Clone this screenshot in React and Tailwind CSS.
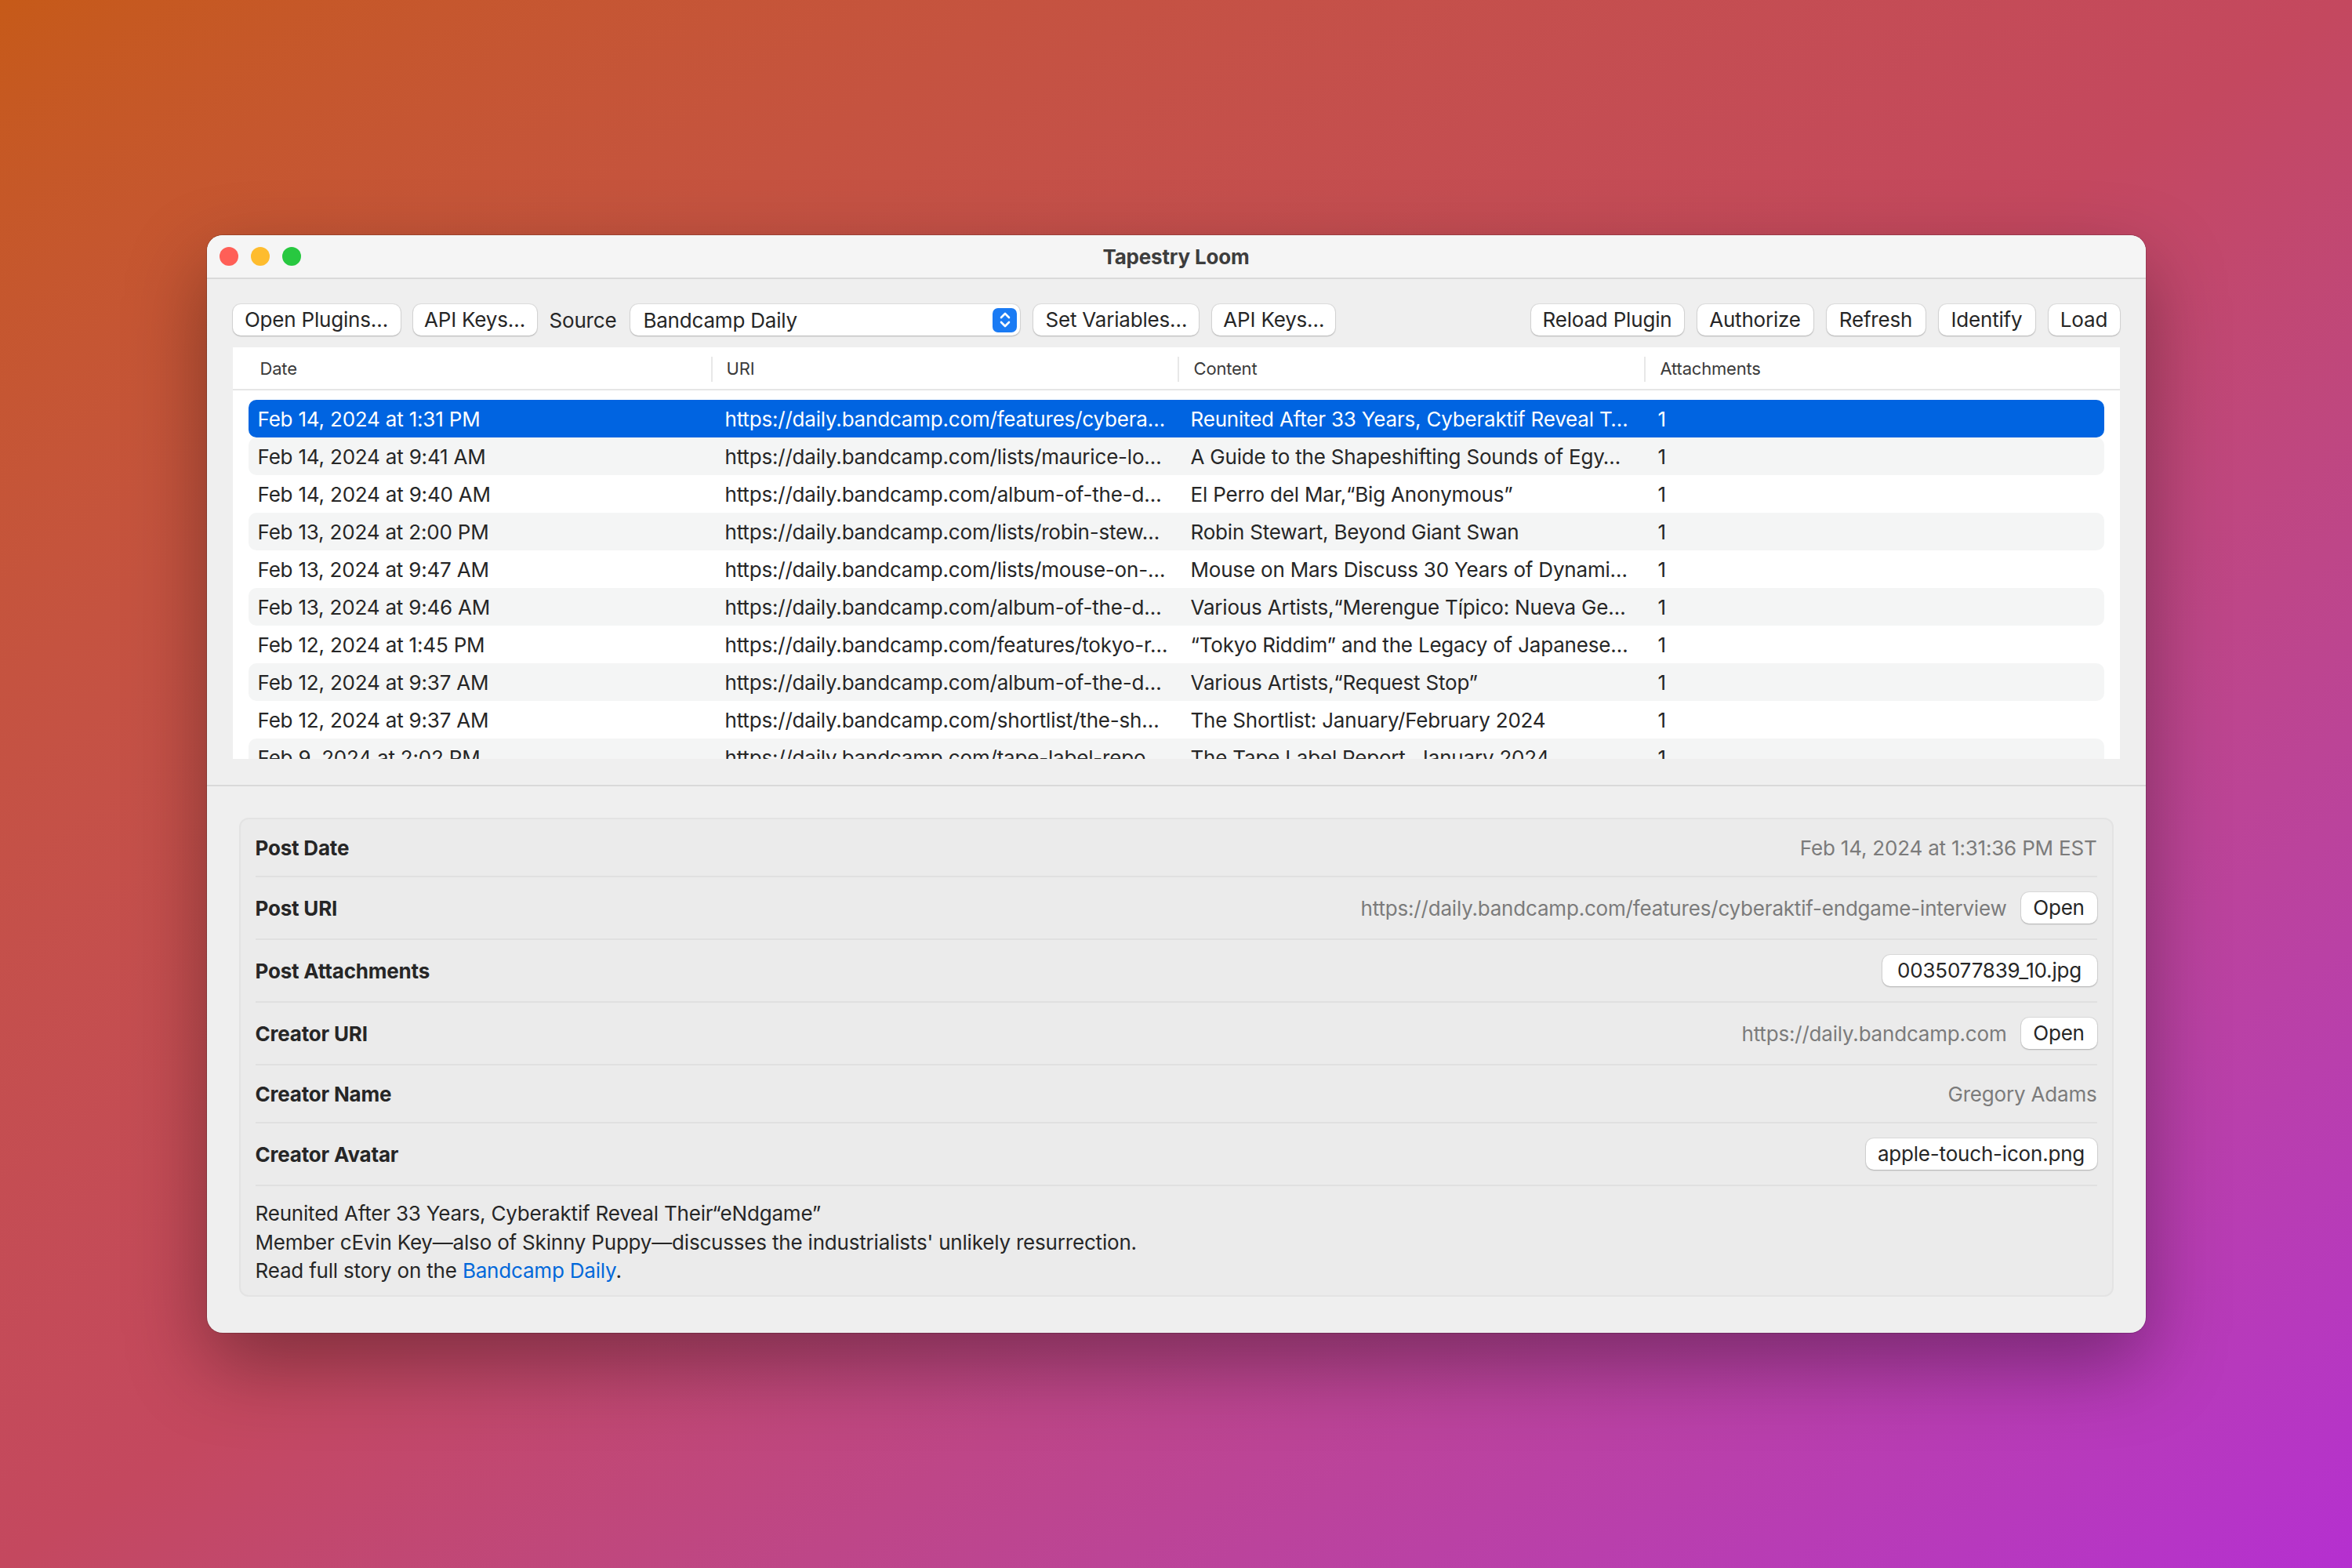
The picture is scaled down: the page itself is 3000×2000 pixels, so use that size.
import React from 'react';

const rows = [
    ['Feb 14, 2024 at 1:31 PM', 'https://daily.bandcamp.com/features/cybera…', 'Reunited After 33 Years, Cyberaktif Reveal T…'],
    ['Feb 14, 2024 at 9:41 AM', 'https://daily.bandcamp.com/lists/maurice-lo…', 'A Guide to the Shapeshifting Sounds of Egy…'],
    ['Feb 14, 2024 at 9:40 AM', 'https://daily.bandcamp.com/album-of-the-d…', 'El Perro del Mar,“Big Anonymous”'],
    ['Feb 13, 2024 at 2:00 PM', 'https://daily.bandcamp.com/lists/robin-stew…', 'Robin Stewart, Beyond Giant Swan'],
    ['Feb 13, 2024 at 9:47 AM', 'https://daily.bandcamp.com/lists/mouse-on-…', 'Mouse on Mars Discuss 30 Years of Dynami…'],
    ['Feb 13, 2024 at 9:46 AM', 'https://daily.bandcamp.com/album-of-the-d…', 'Various Artists,“Merengue Típico: Nueva Ge…'],
    ['Feb 12, 2024 at 1:45 PM', 'https://daily.bandcamp.com/features/tokyo-r…', '“Tokyo Riddim” and the Legacy of Japanese…'],
    ['Feb 12, 2024 at 9:37 AM', 'https://daily.bandcamp.com/album-of-the-d…', 'Various Artists,“Request Stop”'],
    ['Feb 12, 2024 at 9:37 AM', 'https://daily.bandcamp.com/shortlist/the-sh…', 'The Shortlist: January/February 2024'],
    ['Feb 9, 2024 at 2:02 PM', 'https://daily.bandcamp.com/tape-label-repo…', 'The Tape Label Report, January 2024'],
];

function Button({ children, className = '' }) {
    return (
        <button className={`h-[40px] shrink-0 rounded-[10px] bg-white text-[26px] leading-none text-[#262626] shadow-[0_0_0_1px_rgba(0,0,0,0.07),0_1px_2px_rgba(0,0,0,0.2)] ${className}`}>
            {children}
        </button>
    );
}

function Stepper() {
    return (
        <div className="flex h-[31px] w-[31px] items-center justify-center rounded-[7px] bg-[#1a7bf4]">
            <svg width="16" height="22" viewBox="0 0 16 22" fill="none" stroke="white" strokeWidth="2.6" strokeLinecap="round" strokeLinejoin="round">
                <path d="M3 8 L8 3 L13 8" />
                <path d="M3 14 L8 19 L13 14" />
            </svg>
        </div>
    );
}

function DetailRow({ label, children, tall }) {
    return (
        <div className={`flex items-center justify-between border-b-2 border-[#e0e0e0] ${tall ? 'h-[80px]' : 'h-[74px]'}`}>
            <span className="text-[26px] font-bold text-[#262626]">{label}</span>
            <div className="flex items-center gap-[18px]">{children}</div>
        </div>
    );
}

export default function App() {
    return (
        <div className="flex h-[2000px] w-[3000px] items-center justify-center bg-gradient-to-br from-[#c65a18] via-[#c4485f] to-[#b52fd0] font-['Inter','Noto_Sans',sans-serif] tracking-[-0.012em]">
            {/* Window */}
            <div className="flex h-[1400px] w-[2473px] flex-col overflow-hidden rounded-[20px] bg-[#efefef] shadow-[0_0_0_1px_rgba(0,0,0,0.15),0_40px_100px_rgba(0,0,0,0.35)]">
                {/* Title bar */}
                <div className="relative flex h-[56px] shrink-0 items-center border-b-2 border-[#dadada] bg-[#f5f5f5] px-[16px]">
                    <div className="flex gap-[16px]">
                        <span className="h-[24px] w-[24px] rounded-full bg-[#ff5f57]" />
                        <span className="h-[24px] w-[24px] rounded-full bg-[#febc2e]" />
                        <span className="h-[24px] w-[24px] rounded-full bg-[#28c840]" />
                    </div>
                    <div className="absolute inset-0 flex items-center justify-center text-[26px] font-bold text-[#3d3d3d]">
                        Tapestry Loom
                    </div>
                </div>

                {/* Toolbar */}
                <div className="flex items-center px-[33px] pt-[32px]">
                    <Button className="w-[214px]">Open Plugins…</Button>
                    <Button className="ml-[16px] w-[158px]">API Keys…</Button>
                    <span className="ml-[16px] text-[26px] text-[#262626]">Source</span>
                    <div className="ml-[18px] flex h-[40px] w-[497px] items-center justify-between rounded-[10px] bg-white pl-[16px] pr-[4px] shadow-[0_0_0_1px_rgba(0,0,0,0.07),0_1px_2px_rgba(0,0,0,0.2)]">
                        <span className="text-[26px] text-[#262626]">Bandcamp Daily</span>
                        <Stepper />
                    </div>
                    <Button className="ml-[17px] w-[211px]">Set Variables…</Button>
                    <Button className="ml-[17px] w-[157px]">API Keys…</Button>
                    <div className="flex-1" />
                    <div className="flex gap-[17px]">
                        <Button className="w-[195px]">Reload Plugin</Button>
                        <Button className="w-[148px]">Authorize</Button>
                        <Button className="w-[126px]">Refresh</Button>
                        <Button className="w-[123px]">Identify</Button>
                        <Button className="w-[91px]">Load</Button>
                    </div>
                </div>

                {/* Table */}
                <div className="mx-[33px] mt-[15px] h-[525px] shrink-0 overflow-hidden bg-white">
                    <div className="flex h-[55px] items-center border-b-2 border-[#e6e6e6] pt-[2px] text-[22px] text-[#3a3a3a]">
                        <div className="w-[610px] pl-[35px]">Date</div>
                        <div className="flex w-[595px] items-center">
                            <span className="h-[32px] w-[2px] bg-[#e8e8e8]" />
                            <span className="pl-[18px]">URI</span>
                        </div>
                        <div className="flex w-[595px] items-center">
                            <span className="h-[32px] w-[2px] bg-[#e8e8e8]" />
                            <span className="pl-[19px]">Content</span>
                        </div>
                        <div className="flex flex-1 items-center">
                            <span className="h-[32px] w-[2px] bg-[#e8e8e8]" />
                            <span className="pl-[19px]">Attachments</span>
                        </div>
                    </div>
                    <div className="px-[20px] pt-[12px]">
                        {rows.map((r, i) => (
                            <div
                                key={i}
                                className={`grid h-[48px] grid-cols-[596px_594px_596px_1fr] items-center rounded-[10px] pl-[12px] text-[26px] ${
                                    i === 0 ? 'bg-[#0064e1] text-white' : i % 2 === 1 ? 'bg-[#f4f5f5] text-[#262626]' : 'text-[#262626]'
                                }`}
                            >
                                <span className="truncate pr-[16px]">{r[0]}</span>
                                <span className="truncate pr-[16px]">{r[1]}</span>
                                <span className="truncate pr-[16px]">{r[2]}</span>
                                <span>1</span>
                            </div>
                        ))}
                    </div>
                </div>

                <div className="mt-[33px] h-[2px] shrink-0 bg-[#d9d9d9]" />

                {/* Detail */}
                <div className="px-[41px] pt-[40px]">
                    <div className="h-[611px] rounded-[12px] border-2 border-[#e3e3e3] bg-[#ebebeb] px-[19px]">
                        <DetailRow label="Post Date">
                            <span className="text-[26px] text-[#7b7b7b]">Feb 14, 2024 at 1:31:36 PM EST</span>
                        </DetailRow>
                        <DetailRow label="Post URI" tall>
                            <span className="text-[26px] text-[#7b7b7b]">https://daily.bandcamp.com/features/cyberaktif-endgame-interview</span>
                            <Button className="w-[97px]">Open</Button>
                        </DetailRow>
                        <DetailRow label="Post Attachments" tall>
                            <Button className="w-[274px]">0035077839_10.jpg</Button>
                        </DetailRow>
                        <DetailRow label="Creator URI" tall>
                            <span className="text-[26px] text-[#7b7b7b]">https://daily.bandcamp.com</span>
                            <Button className="w-[97px]">Open</Button>
                        </DetailRow>
                        <DetailRow label="Creator Name">
                            <span className="text-[26px] text-[#7b7b7b]">Gregory Adams</span>
                        </DetailRow>
                        <DetailRow label="Creator Avatar" tall>
                            <Button className="w-[295px]">apple-touch-icon.png</Button>
                        </DetailRow>
                        <div className="pt-[17px] text-[26px] leading-[36.5px] text-[#262626]">
                            <p>Reunited After 33 Years, Cyberaktif Reveal Their“eNdgame”</p>
                            <p>Member cEvin Key—also of Skinny Puppy—discusses the industrialists' unlikely resurrection.</p>
                            <p>
                                Read full story on the <span className="text-[#0068da]">Bandcamp Daily</span>.
                            </p>
                        </div>
                    </div>
                </div>
            </div>
        </div>
    );
}
